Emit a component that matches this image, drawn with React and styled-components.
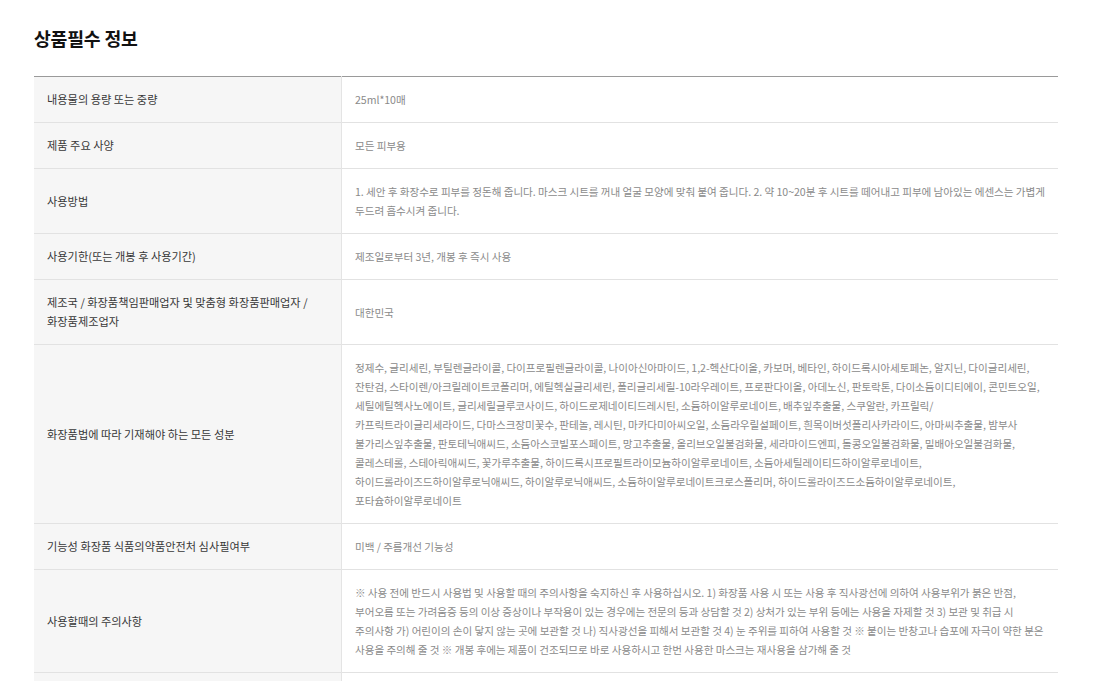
import React from 'react';
import styled, { createGlobalStyle } from 'styled-components';

const GlobalStyle = createGlobalStyle`
  body {
    margin: 0;
    background: #fff;
    font-family: "Noto Sans CJK KR", "Noto Sans", sans-serif;
  }
`;

const Wrapper = styled.section`
  padding: 26px 45px 40px 34px;
`;

const Title = styled.h2`
  margin: 0 0 26px 0;
  font-size: 18.3px;
  line-height: 24px;
  font-weight: 700;
  color: #111;
  letter-spacing: -0.2px;
`;

const Table = styled.table`
  width: 100%;
  border-collapse: collapse;
  border-top: 1px solid #9a9a9a;
`;

const Row = styled.tr`
  border-bottom: 1px solid #e2e2e2;
`;

const Label = styled.th`
  width: 281px;
  padding: 13px 13px;
  background: #f6f6f6;
  border-right: 1px solid #e4e4e4;
  text-align: left;
  vertical-align: middle;
  font-size: 11.2px;
  line-height: 19px;
  font-weight: 400;
  color: #383838;
`;

const Value = styled.td`
  padding: 13px 13px;
  vertical-align: middle;
  font-size: 10.6px;
  line-height: 19px;
  color: #8a8a8a;
  letter-spacing: -0.05px;
`;

const Line = styled.div`
  white-space: nowrap;
`;

const rows = [
  { label: ['내용물의 용량 또는 중량'], value: ['25ml*10매'] },
  { label: ['제품 주요 사양'], value: ['모든 피부용'] },
  {
    label: ['사용방법'],
    value: [
      '1. 세안 후 화장수로 피부를 정돈해 줍니다. 마스크 시트를 꺼내 얼굴 모양에 맞춰 붙여 줍니다. 2. 약 10~20분 후 시트를 떼어내고 피부에 남아있는 에센스는 가볍게',
      '두드려 흡수시켜 줍니다.'
    ]
  },
  { label: ['사용기한(또는 개봉 후 사용기간)'], value: ['제조일로부터 3년, 개봉 후 즉시 사용'] },
  {
    label: ['제조국 / 화장품책임판매업자 및 맞춤형 화장품판매업자 /', '화장품제조업자'],
    value: ['대한민국']
  },
  {
    label: ['화장품법에 따라 기재해야 하는 모든 성분'],
    value: [
      '정제수, 글리세린, 부틸렌글라이콜, 다이프로필렌글라이콜, 나이아신아마이드, 1,2-헥산다이올, 카보머, 베타인, 하이드록시아세토페논, 알지닌, 다이글리세린,',
      '잔탄검, 스타이렌/아크릴레이트코폴리머, 에틸헥실글리세린, 폴리글리세릴-10라우레이트, 프로판다이올, 아데노신, 판토락톤, 다이소듐이디티에이, 콘민트오일,',
      '세틸에틸헥사노에이트, 글리세릴글루코사이드, 하이드로제네이티드레시틴, 소듐하이알루로네이트, 배추잎추출물, 스쿠알란, 카프릴릭/',
      '카프릭트라이글리세라이드, 다마스크장미꽃수, 판테놀, 레시틴, 마카다미아씨오일, 소듐라우릴설페이트, 흰목이버섯폴리사카라이드, 아마씨추출물, 밤부사',
      '불가리스잎추출물, 판토테닉애씨드, 소듐아스코빌포스페이트, 망고추출물, 올리브오일불검화물, 세라마이드엔피, 돌콩오일불검화물, 밀배아오일불검화물,',
      '콜레스테롤, 스테아릭애씨드, 꽃가루추출물, 하이드록시프로필트라이모늄하이알루로네이트, 소듐아세틸레이티드하이알루로네이트,',
      '하이드롤라이즈드하이알루로닉애씨드, 하이알루로닉애씨드, 소듐하이알루로네이트크로스폴리머, 하이드롤라이즈드소듐하이알루로네이트,',
      '포타슘하이알루로네이트'
    ]
  },
  { label: ['기능성 화장품 식품의약품안전처 심사필여부'], value: ['미백 / 주름개선 기능성'] },
  {
    label: ['사용할때의 주의사항'],
    value: [
      '※ 사용 전에 반드시 사용법 및 사용할 때의 주의사항을 숙지하신 후 사용하십시오. 1) 화장품 사용 시 또는 사용 후 직사광선에 의하여 사용부위가 붉은 반점,',
      '부어오름 또는 가려움증 등의 이상 증상이나 부작용이 있는 경우에는 전문의 등과 상담할 것 2) 상처가 있는 부위 등에는 사용을 자제할 것 3) 보관 및 취급 시',
      '주의사항 가) 어린이의 손이 닿지 않는 곳에 보관할 것 나) 직사광선을 피해서 보관할 것 4) 눈 주위를 피하여 사용할 것 ※ 붙이는 반창고나 습포에 자극이 약한 분은',
      '사용을 주의해 줄 것 ※ 개봉 후에는 제품이 건조되므로 바로 사용하시고 한번 사용한 마스크는 재사용을 삼가해 줄 것'
    ]
  },
  {
    label: ['품질보증기준'],
    value: [
      '본 제품에 이상이 있을 경우 공정거래위원회 고시 소비자분쟁해결기준에 의해 보상받을 수 있습니다.',
      '제품 구입 후 교환 및 반품은 구입처에서 가능합니다.'
    ]
  }
];

const App = () => {
  return (
    <Wrapper>
      <GlobalStyle />
      <Title>상품필수 정보</Title>
      <Table>
        <tbody>
          {rows.map((row, i) => (
            <Row key={i}>
              <Label>
                {row.label.map((l, j) => <Line key={j}>{l}</Line>)}
              </Label>
              <Value>
                {row.value.map((v, j) => <Line key={j}>{v}</Line>)}
              </Value>
            </Row>
          ))}
        </tbody>
      </Table>
    </Wrapper>
  );
};

export default App;
